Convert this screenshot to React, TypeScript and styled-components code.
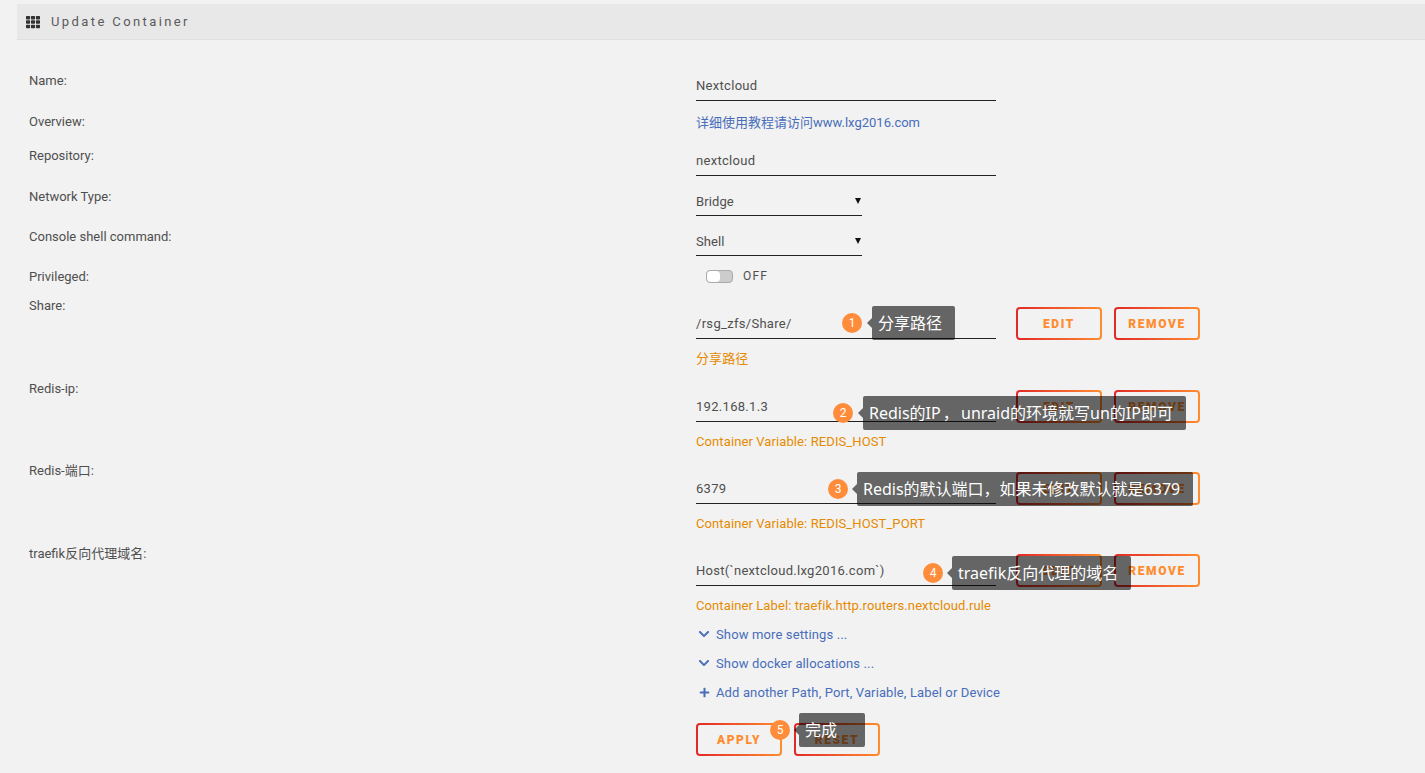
import { ReactNode } from 'react'
import styled, { createGlobalStyle } from 'styled-components'
import { FaChevronDown, FaPlus, FaTh } from 'react-icons/fa'

const fontStack = `Roboto, "Noto Sans CJK SC", sans-serif`
const tipFont = `"Noto Sans", "Noto Sans CJK SC", sans-serif`

interface NoteData {
  step: number
  text: string
  left: number
  top: number
  gap?: number
  minWidth?: number
}

const GlobalStyle = createGlobalStyle`
  html, body {
    margin: 0;
    background: #f2f2f2;
  }
  body {
    font-family: ${fontStack};
    font-size: 13px;
    color: #4f4f4f;
  }
`

const Note = ({ step, text, left, top, gap = 10, minWidth = 0 }: NoteData) => (
  <NoteWrap $left={left} $top={top} $gap={gap}>
    <Badge>{step}</Badge>
    <Tip $minWidth={minWidth}>{text}</Tip>
  </NoteWrap>
)

interface FieldProps {
  label: string
  value: string
  hint: string
  offset: number
  height: number
  note?: NoteData
}

const GradientButtons = () => (
  <>
    <OutlineButton>EDIT</OutlineButton>
    <OutlineButton>REMOVE</OutlineButton>
  </>
)

const VariableRow = ({ label, value, hint, offset, height, note }: FieldProps) => (
  <Row $height={height}>
    <Label>{label}</Label>
    <Cell $offset={offset}>
      <InputLine>
        <TextInput readOnly value={value} />
        <GradientButtons />
      </InputLine>
      <Hint>{hint}</Hint>
      {note && <Note {...note} />}
    </Cell>
  </Row>
)

const SelectRow = ({ label, value, height }: { label: string; value: string; height: number }) => (
  <Row $height={height}>
    <Label>{label}</Label>
    <Cell $offset={0}>
      <SelectBox>
        {value}
        <Caret />
      </SelectBox>
    </Cell>
  </Row>
)

const LinkRow = ({ icon, text }: { icon: ReactNode; text: string }) => (
  <MoreLink>
    <LinkIcon>{icon}</LinkIcon>
    {text}
  </MoreLink>
)

export default function App() {
  return (
    <Page>
      <GlobalStyle />
      <TitleBar>
        <FaTh size={14} />
        <Title>Update Container</Title>
      </TitleBar>

      <Form>
        <Row $height={41}>
          <Label>Name:</Label>
          <Cell $offset={0}>
            <TextInput readOnly value="Nextcloud" />
          </Cell>
        </Row>
        <Row $height={34}>
          <Label>Overview:</Label>
          <Cell $offset={4}>
            <Overview>详细使用教程请访问www.lxg2016.com</Overview>
          </Cell>
        </Row>
        <Row $height={41}>
          <Label>Repository:</Label>
          <Cell $offset={0}>
            <TextInput readOnly value="nextcloud" />
          </Cell>
        </Row>
        <SelectRow label="Network Type:" value="Bridge" height={40} />
        <SelectRow label="Console shell command:" value="Shell" height={40} />
        <Row $height={29}>
          <Label>Privileged:</Label>
          <Cell $offset={3}>
            <ToggleWrap>
              <Toggle>
                <Knob />
              </Toggle>
              <ToggleText>OFF</ToggleText>
            </ToggleWrap>
          </Cell>
        </Row>
        <VariableRow
          label="Share:"
          value="/rsg_zfs/Share/"
          hint="分享路径"
          offset={12}
          height={83}
          note={{ step: 1, text: '分享路径', left: 146, top: 11 }}
        />
        <VariableRow
          label="Redis-ip:"
          value="192.168.1.3"
          hint="Container Variable: REDIS_HOST"
          offset={12}
          height={82}
          note={{ step: 2, text: 'Redis的IP ， unraid的环境就写un的IP即可', left: 137, top: 18 }}
        />
        <VariableRow
          label="Redis-端口:"
          value="6379"
          hint="Container Variable: REDIS_HOST_PORT"
          offset={12}
          height={83}
          note={{ step: 3, text: 'Redis的默认端口，如果未修改默认就是6379', left: 132, top: 12, gap: 9 }}
        />
        <VariableRow
          label="traefik反向代理域名:"
          value="Host(`nextcloud.lxg2016.com`)"
          hint="Container Label: traefik.http.routers.nextcloud.rule"
          offset={11}
          height={83}
          note={{ step: 4, text: 'traefik反向代理的域名', left: 227, top: 13, gap: 9 }}
        />
        <Row $height={97}>
          <span />
          <LinkList>
            <LinkRow icon={<FaChevronDown size={12} />} text="Show more settings ..." />
            <LinkRow icon={<FaChevronDown size={12} />} text="Show docker allocations ..." />
            <LinkRow icon={<FaPlus size={11} />} text="Add another Path, Port, Variable, Label or Device" />
          </LinkList>
        </Row>
        <Row $height={50}>
          <span />
          <Actions>
            <OutlineButton>APPLY</OutlineButton>
            <OutlineButton>RESET</OutlineButton>
            <Note step={5} text="完成" left={74} top={-10} gap={9} minWidth={66} />
          </Actions>
        </Row>
      </Form>
    </Page>
  )
}

const Page = styled.div`
  height: 773px;
  overflow: hidden;
  padding: 4px 0 0 17px;
  box-sizing: border-box;
`

const TitleBar = styled.div`
  display: flex;
  align-items: center;
  height: 36px;
  padding-left: 9px;
  box-sizing: border-box;
  background: #e8e8e8;
  border-bottom: 1px solid #e0e0e0;
  color: #333333;
`

const Title = styled.span`
  margin-left: 11px;
  font-size: 13px;
  letter-spacing: 2.4px;
  color: #5a5a5a;
`

const Form = styled.div`
  display: flex;
  flex-direction: column;
  padding: 30px 0 0 12px;
`

const Row = styled.div<{ $height: number }>`
  display: grid;
  grid-template-columns: 667px 1fr;
  height: ${(p) => p.$height}px;
`

const Label = styled.div`
  padding-top: 1px;
  line-height: 20px;
`

const Cell = styled.div<{ $offset: number }>`
  position: relative;
  padding-top: ${(p) => p.$offset}px;
`

const TextInput = styled.input`
  display: block;
  width: 300px;
  height: 31px;
  padding: 1px 0 0 0;
  box-sizing: border-box;
  border: 0;
  border-bottom: 1px solid #222222;
  outline: none;
  background: transparent;
  font-family: ${fontStack};
  font-size: 13px;
  letter-spacing: 0.3px;
  color: #4f4f4f;
`

const InputLine = styled.div`
  display: flex;
  align-items: flex-start;
  gap: 12px;

  & > ${TextInput} {
    margin-right: 8px;
    height: 32px;
  }
`

const Overview = styled.div`
  line-height: 16px;
  color: #486dba;
`

const SelectBox = styled.div`
  display: flex;
  align-items: center;
  justify-content: space-between;
  width: 166px;
  height: 30px;
  padding: 1px 1px 0 0;
  box-sizing: border-box;
  border-bottom: 1px solid #222222;
  letter-spacing: 0.1px;
`

const Caret = styled.i`
  width: 0;
  height: 0;
  border-left: 3px solid transparent;
  border-right: 3px solid transparent;
  border-top: 6px solid #111111;
`

const ToggleWrap = styled.div`
  display: flex;
  align-items: center;
  margin-left: 10px;
  height: 14px;
`

const Toggle = styled.div`
  width: 27px;
  height: 13px;
  box-sizing: border-box;
  border: 1px solid #aaaaaa;
  border-radius: 4px;
  background: #cccccc;
`

const Knob = styled.div`
  width: 13px;
  height: 11px;
  border-radius: 4px;
  background: #ffffff;
`

const ToggleText = styled.span`
  margin-left: 10px;
  font-size: 12px;
  letter-spacing: 1.2px;
`

const Hint = styled.div`
  margin-top: 11px;
  line-height: 16px;
  letter-spacing: 0.1px;
  color: #e68a00;
`

const OutlineButton = styled.button`
  width: 86px;
  height: 33px;
  padding: 0;
  box-sizing: border-box;
  border: 2px solid transparent;
  border-radius: 4px;
  background:
    linear-gradient(#f2f2f2, #f2f2f2) padding-box,
    linear-gradient(90deg, #e22828, #ff8c2f) border-box;
  font-family: ${fontStack};
  font-size: 12px;
  font-weight: 900;
  letter-spacing: 1.6px;
  color: #ff8c2f;
`

const LinkList = styled.div`
  display: flex;
  flex-direction: column;
  gap: 13px;
`

const MoreLink = styled.div`
  display: flex;
  align-items: center;
  height: 16px;
  letter-spacing: 0.13px;
  color: #486dba;
`

const LinkIcon = styled.span`
  display: flex;
  justify-content: center;
  width: 12px;
  margin: 0 6px 0 2px;
`

const Actions = styled.div`
  position: relative;
  display: flex;
  gap: 12px;
  height: 33px;
  align-self: start;
`

const NoteWrap = styled.div<{ $left: number; $top: number; $gap: number }>`
  position: absolute;
  left: ${(p) => p.$left}px;
  top: ${(p) => p.$top}px;
  display: flex;
  align-items: center;
  gap: ${(p) => p.$gap}px;
`

const Badge = styled.span`
  display: flex;
  align-items: center;
  justify-content: center;
  width: 20px;
  height: 20px;
  border-radius: 50%;
  background: #ff8c3a;
  color: #ffffff;
  font-size: 12px;
`

const Tip = styled.div<{ $minWidth: number }>`
  position: relative;
  height: 34px;
  min-width: ${(p) => p.$minWidth}px;
  box-sizing: border-box;
  line-height: 34px;
  padding: 0 13px 0 6px;
  border-radius: 2px;
  background: rgba(0, 0, 0, 0.585);
  color: #ffffff;
  font-family: ${tipFont};
  font-size: 16px;
  word-spacing: -2px;
  white-space: nowrap;

  &::before {
    content: '';
    position: absolute;
    left: -5px;
    top: 12px;
    border-top: 5px solid transparent;
    border-bottom: 5px solid transparent;
    border-right: 5px solid rgba(0, 0, 0, 0.585);
  }
`
